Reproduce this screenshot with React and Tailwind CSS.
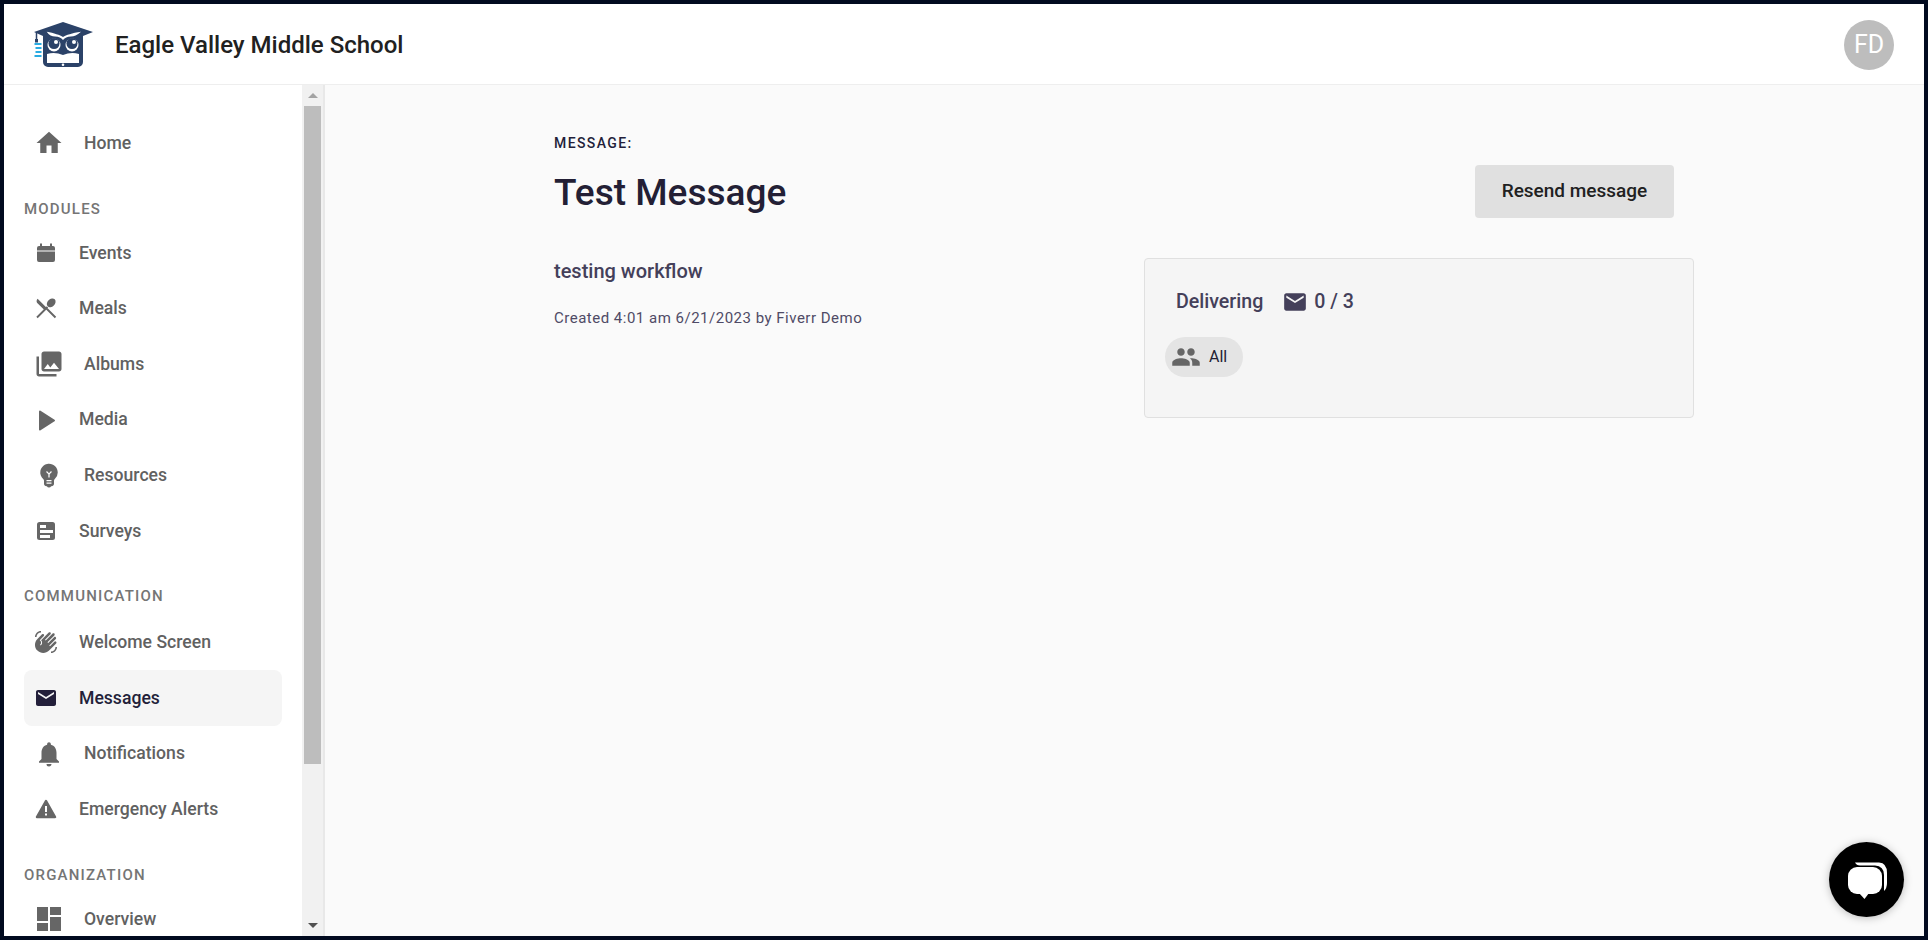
import {
  MdHome,
  MdPhotoLibrary,
  MdEmojiObjects,
  MdWavingHand,
  MdEmail,
  MdNotifications,
  MdDashboard,
  MdPeople,
} from "react-icons/md";

const ROBOTO = { fontFamily: "Roboto, sans-serif" };

function EventIcon({ className }) {
  return (
    <svg viewBox="0 0 24 24" className={className} fill="currentColor">
      <path d="M6 2.500h2V5h8V2.500h2V5h1a2 2 0 0 1 2 2v2.500H3V7a2 2 0 0 1 2-2h1zM3 10.500h18V19a2 2 0 0 1-2 2H5a2 2 0 0 1-2-2z" />
    </svg>
  );
}

function MealsIcon({ className }) {
  return (
    <svg viewBox="0 0 24 24" className={className} fill="currentColor">
      <path d="M3 21.500 13.500 11M12 12l9.500 9.500" stroke="currentColor" strokeWidth="1.900" fill="none" />
      <ellipse cx="17.200" cy="6.800" rx="3.700" ry="5" transform="rotate(45 17.200 6.800)" />
      <path d="M3.600 2.800 12.600 11.800 10.400 14 4 7.800a3.200 3.200 0 0 1-.4-5z" />
    </svg>
  );
}

function PlayIcon({ className }) {
  return (
    <svg viewBox="0 0 24 24" className={className} fill="currentColor" stroke="currentColor" strokeWidth="2" strokeLinejoin="round">
      <path d="M6 3.500 20 12.500 6 21.500z" />
    </svg>
  );
}

function SurveyIcon({ className }) {
  return (
    <svg viewBox="0 0 24 24" className={className}>
      <rect x="3" y="3" width="18" height="18" rx="2.500" fill="currentColor" />
      <rect x="6" y="6" width="6" height="3" fill="#fff" />
      <rect x="6" y="11" width="13" height="3" fill="#fff" />
      <rect x="6" y="16" width="10" height="3" fill="#fff" />
    </svg>
  );
}

function AlertIcon({ className }) {
  return (
    <svg viewBox="0 0 24 24" className={className}>
      <path d="M12 4 21 20H3z" fill="currentColor" stroke="currentColor" strokeWidth="2.500" strokeLinejoin="round" />
      <rect x="11" y="9" width="2" height="6" fill="#fff" />
      <rect x="11" y="16.500" width="2" height="2" fill="#fff" />
    </svg>
  );
}

// overview tile icon, a bit larger than the stock one
function OverviewIcon({ className }) {
  return (
    <svg viewBox="0 0 30 30" className={className} fill="currentColor">
      <rect x="3" y="3" width="11" height="14" />
      <rect x="16" y="3" width="11" height="8" />
      <rect x="3" y="19" width="11" height="8" />
      <rect x="16" y="13" width="11" height="14" />
    </svg>
  );
}

function OwlLogo() {
  return (
    <svg viewBox="0 0 60 46" className="h-[46px] w-[60px]">
      <rect x="0.500" y="21" width="7" height="2" fill="#29abe2" />
      <rect x="1.500" y="25" width="6" height="2" fill="#29abe2" />
      <rect x="1.500" y="29" width="6" height="2" fill="#29abe2" />
      <rect x="0.500" y="33" width="7" height="2" fill="#29abe2" />
      <path d="M2.500 10v9" stroke="#2b4268" strokeWidth="1.500" />
      <rect x="1" y="17" width="3" height="3.500" fill="#2b4268" />
      <path d="M0 10 29 0l30 10-10 4v26a5 5 0 0 1-5 5H14a5 5 0 0 1-5-5V14z" fill="#2b4268" />
      <path d="M13 32c6-2 11-1 16 1 5-2 10-3 16-1v9H13z" fill="#fff" />
      <path d="M12.700 9.700C20 11 26 13 29 15c3-2 9-4 18-5.300-4 3.300-7 4.800-10 4.800-4 0-6 1.500-8 3.500-2-2-4-3.500-8-3.500-3 0-6-1.500-8.300-4.800z" fill="#fff" />
      <circle cx="20" cy="23" r="6.500" fill="#fff" />
      <circle cx="38" cy="23" r="6.500" fill="#fff" />
      <circle cx="20" cy="21.500" r="5.500" fill="#2b4268" />
      <circle cx="38" cy="21.500" r="5.500" fill="#2b4268" />
      <circle cx="22" cy="20" r="2" fill="#fff" />
      <circle cx="40" cy="20" r="2" fill="#fff" />
      <circle cx="29" cy="42.700" r="1.300" fill="#fff" />
    </svg>
  );
}

function ChatIcon() {
  return (
    <svg viewBox="0 0 75 75" className="h-[75px] w-[75px]" fill="#fff">
      <path d="M26 20.500H50Q58 21 58 31V41Q58 46 55 49V33Q55 24 46 23.500H31Q27.500 23.500 26 20.500z" />
      <rect x="19" y="25" width="34" height="27" rx="9" />
      <path d="M30 51H40L35.500 57z" />
    </svg>
  );
}

const iconSmall = "mr-[21px] h-6 w-6 shrink-0";
const iconLarge = "mr-5 h-[30px] w-[30px] shrink-0";

function NavItem({ icon: Icon, label, large, active }) {
  return (
    <div
      className={`flex h-[55.6px] items-center rounded-lg pl-2.5 text-[17.6px] font-medium ${
        active ? "bg-[#f5f5f5] text-[#231f3a]" : "text-[#616161]"
      }`}
    >
      <Icon className={`${large ? iconLarge : iconSmall} ${active ? "text-[#231f3a]" : "text-[#666666]"}`} />
      <span>{label}</span>
    </div>
  );
}

function SectionLabel({ children, spaced }) {
  return (
    <div
      className={`mt-5 flex h-[34px] items-center pt-0.5 text-[15px] font-medium tracking-[1.2px] text-[#757575] ${
        spaced ? "mb-0.5" : ""
      }`}
    >
      {children}
    </div>
  );
}

function SideScrollbar() {
  return (
    <div className="flex w-[23px] shrink-0 flex-col border-r-2 border-[#e8e8e8] bg-[#f1f1f1] pl-0.5">
      <div className="flex h-[21px] w-[17px] items-center justify-center">
        <div className="h-0 w-0 border-x-[5px] border-b-[5px] border-x-transparent border-b-[#a3a3a3]" />
      </div>
      <div className="h-[658px] w-[17px] bg-[#bdbdbd]" />
      <div className="flex-1" />
      <div className="flex h-[21px] w-[17px] items-center justify-center">
        <div className="h-0 w-0 border-x-[5px] border-t-[5px] border-x-transparent border-t-[#505050]" />
      </div>
    </div>
  );
}

export default function App() {
  return (
    <div className="relative flex h-[940px] flex-col overflow-hidden border-4 border-[#010a1f] bg-[#fafafa]" style={ROBOTO}>
      {/* Top bar */}
      <header className="flex h-[81px] shrink-0 items-center justify-between border-b border-[#eeeeee] bg-white px-[30px] pt-0.5">
        <div className="flex items-center">
          <OwlLogo />
          <h1 className="ml-[21px] text-[24px] font-medium text-[#212121]">Eagle Valley Middle School</h1>
        </div>
        <div className="flex h-[50px] w-[50px] items-center justify-center rounded-full bg-[#bdbdbd] text-[25px] text-white">
          FD
        </div>
      </header>

      <div className="flex min-h-0 flex-1">
        {/* Sidebar */}
        <aside className="flex w-[321px] shrink-0 bg-white">
          <nav className="w-[298px] shrink-0 overflow-hidden px-5 pt-[30.5px]">
            <NavItem icon={MdHome} label="Home" large />
            <SectionLabel>MODULES</SectionLabel>
            <NavItem icon={EventIcon} label="Events" />
            <NavItem icon={MealsIcon} label="Meals" />
            <NavItem icon={MdPhotoLibrary} label="Albums" large />
            <NavItem icon={PlayIcon} label="Media" />
            <NavItem icon={MdEmojiObjects} label="Resources" large />
            <NavItem icon={SurveyIcon} label="Surveys" />
            <SectionLabel spaced>COMMUNICATION</SectionLabel>
            <NavItem icon={MdWavingHand} label="Welcome Screen" />
            <NavItem icon={MdEmail} label="Messages" active />
            <NavItem icon={MdNotifications} label="Notifications" large />
            <NavItem icon={AlertIcon} label="Emergency Alerts" />
            <SectionLabel>ORGANIZATION</SectionLabel>
            <NavItem icon={OverviewIcon} label="Overview" large />
          </nav>
          <SideScrollbar />
        </aside>

        {/* Main */}
        <main className="min-w-0 flex-1 pl-[229px] pt-[49px]">
          <div className="w-[1140px]">
            <div className="text-[14px] font-medium leading-[18px] tracking-[1.4px] text-[#231f3a]">MESSAGE:</div>
            <div className="mt-[9px] flex items-center justify-between pr-5">
              <h2 className="pt-1 text-[37px] font-medium leading-[56px] text-[#231f35]">Test Message</h2>
              <button className="flex h-[53px] w-[199px] items-center justify-center rounded bg-[#e0e0e0] text-[19px] font-medium text-[#212121]">
                Resend message
              </button>
            </div>
            <div className="mt-[37px] flex justify-between">
              <div>
                <p className="text-[20px] font-medium leading-[26px] text-[#44405a]">testing workflow</p>
                <p className="mt-6 text-[15px] leading-5 tracking-[0.5px] text-[#4f4b66]">
                  Created 4:01 am 6/21/2023 by Fiverr Demo
                </p>
              </div>
              <section className="h-[160px] w-[550px] rounded border border-[#e0e0e0] bg-[#f5f5f5] pl-5 pt-[30px]">
                <div className="flex items-center pl-[11px] text-[19.6px] font-medium leading-[26px] text-[#44405a]">
                  <span>Delivering</span>
                  <MdEmail className="ml-[19px] h-[26px] w-[26px] text-[#44405a]" />
                  <span className="ml-[6px]">0 / 3</span>
                </div>
                <div className="mt-[22px] flex h-10 w-[78px] items-center rounded-full bg-[#e4e4e4] pl-1.5 text-[16px] text-[#231f35]">
                  <MdPeople className="h-[30px] w-[30px] text-[#666666]" />
                  <span className="ml-2">All</span>
                </div>
              </section>
            </div>
          </div>
        </main>
      </div>

      {/* Chat launcher */}
      <button className="absolute bottom-[19px] right-5 h-[75px] w-[75px] rounded-full bg-black shadow-[0_1px_8px_rgba(0,0,0,0.25)]">
        <ChatIcon />
      </button>
    </div>
  );
}
